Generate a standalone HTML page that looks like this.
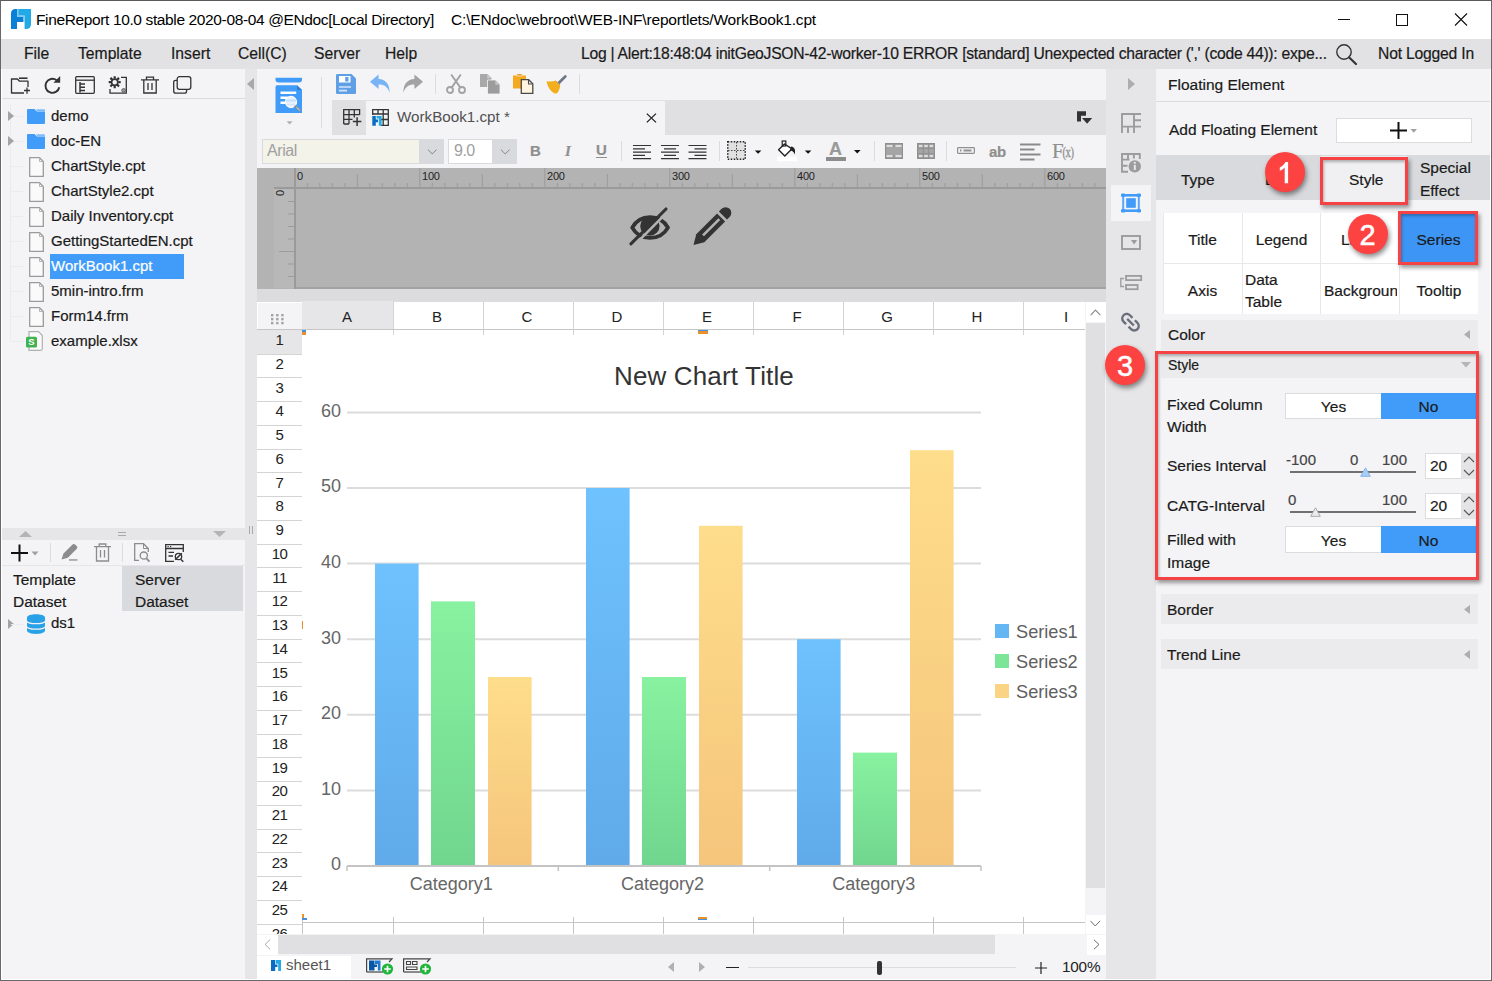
<!DOCTYPE html>
<html>
<head>
<meta charset="utf-8">
<title>FineReport</title>
<style>
*{box-sizing:border-box;margin:0;padding:0}
html,body{width:1492px;height:981px;overflow:hidden;background:#f4f4f6}
body{position:relative;font-family:"Liberation Sans",sans-serif;font-size:16px;color:#1a1a1a}
.a{position:absolute}
.t{position:absolute;white-space:nowrap;line-height:20px;height:20px;-webkit-text-stroke:0.2px}
svg{position:absolute;overflow:visible}
/* frame */
#titlebar{left:0;top:0;width:1492px;height:39px;background:#fff}
#menubar{left:0;top:39px;width:1492px;height:30px;background:#e2e2e4}
#frameL{left:0;top:0;width:1492px;height:981px;border:1px solid #686868;border-top-color:#5a5a5a;pointer-events:none}
#frameT{left:1px;top:69px;width:1490px;height:911px;border:1px solid #fff;border-top:none;pointer-events:none}
#frameB{display:none}
#frameR{display:none}
.menu{top:44px;font-size:15.7px;color:#1a1a1a}
/* left panel */
#leftdiv{left:245px;top:69px;width:12px;height:910px;background:#e6e6e8}
#ltbline{left:1px;top:98px;width:244px;height:1px;background:#dcdcde}
.tree{left:51px;font-size:15px}
.sel{left:50px;top:254px;width:134px;height:25px;background:#419bf9}
#split{left:1px;top:528px;width:244px;height:12px;background:#e6e6e8}
#dstab2{left:122px;top:566px;width:121px;height:45px;background:#d9dadd}
/* center */
#tabbar{left:332px;top:100px;width:774px;height:35px;background:#e0e0e2}
#tabbtn{left:332px;top:101px;width:35px;height:32px;background:#e0e0e2}
#tabact{left:366px;top:101px;width:299px;height:34px;background:#f4f4f6}
#grayarea{left:257px;top:168px;width:850px;height:121px;background:#b3b3b3}
#band{left:257px;top:289px;width:849px;height:14px;background:#dcdcde}
#sheet{left:257px;top:302px;width:829px;height:632px;background:#fff}
/* right */
#sidestrip{left:1106px;top:69px;width:50px;height:911px;background:#e6e6e8}
#rpanel{left:1156px;top:69px;width:335px;height:910px;background:#f4f4f6}
.red{border:3px solid #f54245;box-shadow:1.5px 3px 4px rgba(0,0,0,.38), inset 1px 2px 3px rgba(0,0,0,.28)}
.circ{width:40px;height:40px;border-radius:20px;background:#fd4242;color:#fff;font-size:29px;line-height:40px;text-align:center;box-shadow:1.5px 3px 5px rgba(0,0,0,.45);-webkit-text-stroke:0.5px #fff}
</style>
</head>
<body>
<!-- FRAME -->
<div class="a" id="titlebar"></div>
<div class="a" id="menubar"></div>


<!-- title bar content -->
<svg style="left:11px;top:9px" width="20" height="20" viewBox="0 0 20 20">
  <path d="M6 0 H20 V15 Q20 20 15 20 H13.6 V6.7 H6 Z" fill="#22aae6"/>
  <path d="M0 20 V4.5 Q0 0 4.5 0 H6 V8 H12.5 V13 H6 V20 Z" fill="#0a7fd6"/>
  <path d="M6 0 H7.6 V6.3 H13.6 V13 H12.5 V8 H6 Z" fill="#7fc9f1"/>
</svg>
<div class="t" id="ttl1" style="left:36px;top:9.6px;font-size:15.5px;letter-spacing:-0.37px;color:#000;-webkit-text-stroke:0">FineReport 10.0 stable 2020-08-04 @ENdoc[Local Directory]</div>
<div class="t" id="ttl2" style="left:451px;top:9.6px;font-size:15.5px;letter-spacing:-0.175px;color:#000;-webkit-text-stroke:0">C:\ENdoc\webroot\WEB-INF\reportlets/WorkBook1.cpt</div>
<svg style="left:1338px;top:12px" width="132" height="16" viewBox="0 0 132 16">
  <path d="M0 7.5 H12" stroke="#111" stroke-width="1" fill="none"/>
  <rect x="58.5" y="2.5" width="11" height="11" stroke="#111" stroke-width="1" fill="none"/>
  <path d="M117 1.5 L129 13.5 M129 1.5 L117 13.5" stroke="#111" stroke-width="1.1" fill="none"/>
</svg>
<!-- menu bar -->
<div class="t menu" id="m1" style="left:24px">File</div>
<div class="t menu" id="m2" style="left:78px">Template</div>
<div class="t menu" id="m3" style="left:171px">Insert</div>
<div class="t menu" id="m4" style="left:238px">Cell(C)</div>
<div class="t menu" id="m5" style="left:314px">Server</div>
<div class="t menu" id="m6" style="left:385px">Help</div>
<div class="t menu" id="mlog" style="left:581px;letter-spacing:-0.26px">Log | Alert:18:48:04 initGeoJSON-42-worker-10 ERROR [standard] Unexpected character (',' (code 44)): expe...</div>
<svg style="left:1335px;top:43px" width="24" height="24" viewBox="0 0 24 24">
  <circle cx="9" cy="9" r="7.2" stroke="#333" stroke-width="1.4" fill="none"/>
  <path d="M14.2 14.5 L21 21" stroke="#333" stroke-width="2.2" stroke-linecap="round"/>
</svg>
<div class="t menu" id="mlogin" style="left:1378px;letter-spacing:-0.2px">Not Logged In</div>

<!-- LEFT PANEL -->
<div class="a" id="leftdiv"></div>
<div class="a" id="ltbline"></div>
<div class="a" style="left:10px;top:104px;width:1px;height:238px;background:#ebebed"></div>
<div class="a" style="left:11px;top:116px;width:12px;height:1px;background:#ebebed"></div>
<svg style="left:8px;top:111px" width="6" height="10" viewBox="0 0 6 10"><path d="M0 0 L6 5 L0 10 Z" fill="#a3a3a3"/></svg>
<svg style="left:27px;top:109px" width="18" height="15" viewBox="0 0 18 15"><path d="M1 0 H7.5 L10 2.6 H18 V14 Q18 15 17 15 H1 Q0 15 0 14 V1 Q0 0 1 0 Z" fill="#419bf9"/><path d="M9 0.3 H17 Q18 0.3 18 1.3 V2.6 H10.6 Z" fill="#7dbcfb"/></svg>
<div class="t tree" id="tr0" style="top:106px;color:#1a1a1a">demo</div>
<div class="a" style="left:11px;top:141px;width:12px;height:1px;background:#ebebed"></div>
<svg style="left:8px;top:136px" width="6" height="10" viewBox="0 0 6 10"><path d="M0 0 L6 5 L0 10 Z" fill="#a3a3a3"/></svg>
<svg style="left:27px;top:134px" width="18" height="15" viewBox="0 0 18 15"><path d="M1 0 H7.5 L10 2.6 H18 V14 Q18 15 17 15 H1 Q0 15 0 14 V1 Q0 0 1 0 Z" fill="#419bf9"/><path d="M9 0.3 H17 Q18 0.3 18 1.3 V2.6 H10.6 Z" fill="#7dbcfb"/></svg>
<div class="t tree" id="tr1" style="top:131px;color:#1a1a1a">doc-EN</div>
<div class="a" style="left:11px;top:166px;width:12px;height:1px;background:#ebebed"></div>
<svg style="left:28.7px;top:156.5px" width="15" height="20" viewBox="0 0 15 20"><path d="M0.7 0.7 H10.5 L14.3 4.5 V19.3 H0.7 Z" fill="#fafafa" stroke="#9a9a9a" stroke-width="1.3"/><path d="M10.5 0.7 V4.5 H14.3" fill="none" stroke="#b5b5b5" stroke-width="1"/></svg>
<div class="t tree" id="tr2" style="top:156px;color:#1a1a1a">ChartStyle.cpt</div>
<div class="a" style="left:11px;top:191px;width:12px;height:1px;background:#ebebed"></div>
<svg style="left:28.7px;top:181.5px" width="15" height="20" viewBox="0 0 15 20"><path d="M0.7 0.7 H10.5 L14.3 4.5 V19.3 H0.7 Z" fill="#fafafa" stroke="#9a9a9a" stroke-width="1.3"/><path d="M10.5 0.7 V4.5 H14.3" fill="none" stroke="#b5b5b5" stroke-width="1"/></svg>
<div class="t tree" id="tr3" style="top:181px;color:#1a1a1a">ChartStyle2.cpt</div>
<div class="a" style="left:11px;top:216px;width:12px;height:1px;background:#ebebed"></div>
<svg style="left:28.7px;top:206.5px" width="15" height="20" viewBox="0 0 15 20"><path d="M0.7 0.7 H10.5 L14.3 4.5 V19.3 H0.7 Z" fill="#fafafa" stroke="#9a9a9a" stroke-width="1.3"/><path d="M10.5 0.7 V4.5 H14.3" fill="none" stroke="#b5b5b5" stroke-width="1"/></svg>
<div class="t tree" id="tr4" style="top:206px;color:#1a1a1a">Daily Inventory.cpt</div>
<div class="a" style="left:11px;top:241px;width:12px;height:1px;background:#ebebed"></div>
<svg style="left:28.7px;top:231.5px" width="15" height="20" viewBox="0 0 15 20"><path d="M0.7 0.7 H10.5 L14.3 4.5 V19.3 H0.7 Z" fill="#fafafa" stroke="#9a9a9a" stroke-width="1.3"/><path d="M10.5 0.7 V4.5 H14.3" fill="none" stroke="#b5b5b5" stroke-width="1"/></svg>
<div class="t tree" id="tr5" style="top:231px;color:#1a1a1a">GettingStartedEN.cpt</div>
<div class="a sel"></div>
<div class="a" style="left:11px;top:266px;width:12px;height:1px;background:#ebebed"></div>
<svg style="left:28.7px;top:256.5px" width="15" height="20" viewBox="0 0 15 20"><path d="M0.7 0.7 H10.5 L14.3 4.5 V19.3 H0.7 Z" fill="#fafafa" stroke="#9a9a9a" stroke-width="1.3"/><path d="M10.5 0.7 V4.5 H14.3" fill="none" stroke="#b5b5b5" stroke-width="1"/></svg>
<div class="t tree" id="tr6" style="top:256px;color:#fff">WorkBook1.cpt</div>
<div class="a" style="left:11px;top:291px;width:12px;height:1px;background:#ebebed"></div>
<svg style="left:28.7px;top:281.5px" width="15" height="20" viewBox="0 0 15 20"><path d="M0.7 0.7 H10.5 L14.3 4.5 V19.3 H0.7 Z" fill="#fafafa" stroke="#9a9a9a" stroke-width="1.3"/><path d="M10.5 0.7 V4.5 H14.3" fill="none" stroke="#b5b5b5" stroke-width="1"/></svg>
<div class="t tree" id="tr7" style="top:281px;color:#1a1a1a">5min-intro.frm</div>
<div class="a" style="left:11px;top:316px;width:12px;height:1px;background:#ebebed"></div>
<svg style="left:28.7px;top:306.5px" width="15" height="20" viewBox="0 0 15 20"><path d="M0.7 0.7 H10.5 L14.3 4.5 V19.3 H0.7 Z" fill="#fafafa" stroke="#9a9a9a" stroke-width="1.3"/><path d="M10.5 0.7 V4.5 H14.3" fill="none" stroke="#b5b5b5" stroke-width="1"/></svg>
<div class="t tree" id="tr8" style="top:306px;color:#1a1a1a">Form14.frm</div>
<div class="a" style="left:11px;top:341px;width:12px;height:1px;background:#ebebed"></div>
<svg style="left:26px;top:331px" width="17" height="20" viewBox="0 0 17 20"><path d="M3 0.7 H12.5 L16.3 4.5 V17.5 Q16.3 19.3 14.5 19.3 H3 Z" fill="#fafafa" stroke="#b0b0b0" stroke-width="1.2"/><rect x="0" y="5.8" width="11" height="10.6" rx="1.5" fill="#3fb34f"/><text x="5.5" y="14.4" font-size="9.5" font-weight="bold" fill="#fff" text-anchor="middle" font-family="Liberation Sans">S</text></svg>
<div class="t tree" id="tr9" style="top:331px;color:#1a1a1a">example.xlsx</div>
<div class="a" id="split"></div>
<div class="a" id="dstab2"></div>


<!-- left toolbar icons -->
<svg style="left:10px;top:76px" width="22" height="19" viewBox="0 0 22 19" fill="none" stroke="#333" stroke-width="1.3" stroke-linejoin="round">
  <path d="M14 17 H1.5 V3 H7.5 L9.5 5.2 H18 V11"/><path d="M9 2.2 H17.5" stroke-width="1.6"/><path d="M14 14.5 H20 M17 11.5 V17.8"/>
</svg>
<svg style="left:44px;top:76px" width="18" height="18" viewBox="0 0 18 18" fill="none" stroke="#333" stroke-width="1.9">
  <path d="M15.3 11.2 A7 7 0 1 1 12.6 4.2"/><path d="M16.2 0 V6.8 H9.4 Z" fill="#333" stroke="none"/>
</svg>
<svg style="left:75px;top:76px" width="20" height="18" viewBox="0 0 20 18" fill="none" stroke="#333" stroke-width="1.3">
  <rect x="0.7" y="0.7" width="18.6" height="16.6" rx="1"/><path d="M0.7 4.2 H19.3"/><path d="M5 6 V16.5 M5 8 H10 M5 11.3 H10 M5 14.6 H10" stroke-width="1.5"/>
</svg>
<svg style="left:108px;top:76px" width="20" height="18" viewBox="0 0 20 18" fill="none" stroke="#333" stroke-width="1.3">
  <path d="M13 1.4 H18.3 V17.2 H2 V13"/>
  <circle cx="6.7" cy="6.2" r="3.1" stroke-width="1.6"/><path d="M6.7 0.2 V2.6 M6.7 9.8 V12.2 M0.7 6.2 H3.1 M10.3 6.2 H12.7 M2.4 1.9 L4.1 3.6 M9.3 8.8 L11 10.5 M2.4 10.5 L4.1 8.8 M9.3 3.6 L11 1.9" stroke-width="2.2"/>
  <circle cx="15.6" cy="14.4" r="1.9" fill="#999" stroke="#555" stroke-width="0.8"/>
</svg>
<svg style="left:141px;top:75px" width="18" height="19" viewBox="0 0 18 19" fill="none" stroke="#333" stroke-width="1.3">
  <path d="M0 4.8 H18 M5.5 4.6 V2.2 H12.5 V4.6 M2.8 4.9 V18 H15.2 V4.9 M7 8 V15 M11 8 V15"/>
</svg>
<svg style="left:173px;top:76px" width="19" height="18" viewBox="0 0 19 18" fill="none" stroke="#333" stroke-width="1.3">
  <rect x="4.2" y="0.7" width="13.6" height="12.6" rx="2.2"/><path d="M4 4.3 H2.8 Q0.7 4.3 0.7 6.4 V15 Q0.7 17.2 2.8 17.2 H11.5 Q13.6 17.2 13.6 15 V13.5"/>
</svg>
<svg style="left:247px;top:78px" width="8" height="12" viewBox="0 0 8 12"><path d="M7 0 L0 6 L7 12 Z" fill="#a8a8a8"/></svg>
<!-- splitter arrows -->
<svg style="left:19px;top:531px" width="13" height="6" viewBox="0 0 13 6"><path d="M0 6 L6.5 0 L13 6 Z" fill="#b4b4b4"/></svg>
<svg style="left:213px;top:531px" width="13" height="6" viewBox="0 0 13 6"><path d="M0 0 L13 0 L6.5 6 Z" fill="#b4b4b4"/></svg>
<div class="a" style="left:118px;top:532px;width:8px;height:1px;background:#aaa"></div>
<div class="a" style="left:118px;top:535px;width:8px;height:1px;background:#aaa"></div>
<div class="a" style="left:249px;top:526px;width:1px;height:8px;background:#aaa"></div>
<div class="a" style="left:252px;top:526px;width:1px;height:8px;background:#aaa"></div>
<!-- dataset toolbar -->
<svg style="left:11px;top:544px" width="30" height="18" viewBox="0 0 30 18" fill="none" stroke="#111" stroke-width="2">
  <path d="M0 9 H17 M8.5 0.5 V17.5"/><path d="M20.5 7.5 H27.5 L24 11.5 Z" fill="#a0a0a0" stroke="none"/>
</svg>
<div class="a" style="left:50px;top:543px;width:1px;height:19px;background:#dcdcde"></div>
<svg style="left:61px;top:543px" width="19" height="19" viewBox="0 0 19 19" fill="#8c8c8c" stroke="none">
  <path d="M0.5 16.5 L2.5 10.5 L11.5 1.5 Q12.8 0.3 14.2 1.5 L15.8 3.2 Q17 4.5 15.8 5.8 L6.8 14.8 Z"/><rect x="8" y="16.3" width="8.5" height="1.3"/>
</svg>
<svg style="left:94px;top:543px" width="17" height="19" viewBox="0 0 17 19" fill="none" stroke="#8c8c8c" stroke-width="1.3">
  <path d="M0 3.7 H17 M5.2 3.5 V1 H11.8 V3.5 M2.5 3.8 V18 H14.5 V3.8 M6.5 7 V14.5 M10.5 7 V14.5"/>
</svg>
<div class="a" style="left:122px;top:543px;width:1px;height:19px;background:#dcdcde"></div>
<svg style="left:134px;top:543px" width="17" height="20" viewBox="0 0 17 20" fill="none" stroke="#8c8c8c" stroke-width="1.3">
  <path d="M5 17.3 H0.7 V0.7 H9.5 L14.3 5.5 V9"/><path d="M9.5 0.7 V5.5 H14.3" stroke-width="1"/><circle cx="9.8" cy="12.6" r="3.6"/><path d="M12.4 15.4 L15.5 18.6" stroke-width="1.8"/>
</svg>
<svg style="left:165px;top:544px" width="19" height="18" viewBox="0 0 19 18" fill="none" stroke="#333" stroke-width="1.3">
  <path d="M18.3 8 V0.7 H0.7 V17.3 H9"/><path d="M0.7 4.5 H18.3 M3.5 8.3 H9 M3.5 12 H8"/><path d="M2.5 2.6 H3.7 M5 2.6 H6.2" stroke-width="1.1"/>
  <circle cx="13.5" cy="12.5" r="3.2"/><path d="M10.2 15.8 L16.8 9.2 M16 15.5 L18.3 17.8" stroke-width="1.5"/>
</svg>
<div class="a" style="left:1px;top:565px;width:244px;height:1px;background:#e6e6e8"></div>
<div class="t" id="ds1a" style="left:13px;top:570px;font-size:15.5px">Template</div>
<div class="t" id="ds1b" style="left:13px;top:592px;font-size:15.5px">Dataset</div>
<div class="t" id="ds2a" style="left:135px;top:570px;font-size:15.5px">Server</div>
<div class="t" id="ds2b" style="left:135px;top:592px;font-size:15.5px">Dataset</div>
<svg style="left:8px;top:619px" width="6" height="10" viewBox="0 0 6 10"><path d="M0 0 L6 5 L0 10 Z" fill="#a3a3a3"/></svg>
<div class="a" style="left:11px;top:624px;width:12px;height:1px;background:#ebebed"></div>
<svg style="left:27px;top:614px" width="18" height="20" viewBox="0 0 18 20">
  <path d="M0 3.5 C0 -1 18 -1 18 3.5 V16.5 C18 21 0 21 0 16.5 Z" fill="#29a1e6"/>
  <path d="M0 7.3 C2 10.5 16 10.5 18 7.3 M0 12.8 C2 16 16 16 18 12.8" stroke="#f4f4f6" stroke-width="1.3" fill="none"/>
</svg>
<div class="t" id="ds1" style="left:51px;top:613px;font-size:15px">ds1</div>

<!-- CENTER -->
<div class="a" id="tabbar"></div>
<div class="a" id="tabact"></div>

<!-- ruler -->
<div class="a" style="left:257px;top:168px;width:849px;height:121px;background:#b3b3b3"></div>
<div class="a" style="left:274px;top:189px;width:20px;height:99px;background:#b8b8b8"></div><div class="a" style="left:274px;top:187px;width:832px;height:2px;background:#9a9a9a"></div>
<div class="a" style="left:294px;top:168px;width:2px;height:121px;background:#9a9a9a"></div>

<div class="a" style="left:296px;top:287px;width:810px;height:1.5px;background:#a2a2a2"></div>
<svg style="left:0;top:0" width="1492" height="300" viewBox="0 0 1492 300"><path d="M294.8 168 V188 M307.3 183 V188 M319.8 183 V188 M332.3 183 V188 M344.8 183 V188 M357.3 174 V188 M369.8 183 V188 M382.3 183 V188 M394.8 183 V188 M407.3 183 V188 M419.8 168 V188 M432.3 183 V188 M444.8 183 V188 M457.3 183 V188 M469.8 183 V188 M482.3 174 V188 M494.8 183 V188 M507.3 183 V188 M519.8 183 V188 M532.3 183 V188 M544.8 168 V188 M557.3 183 V188 M569.8 183 V188 M582.3 183 V188 M594.8 183 V188 M607.3 174 V188 M619.8 183 V188 M632.3 183 V188 M644.8 183 V188 M657.3 183 V188 M669.8 168 V188 M682.3 183 V188 M694.8 183 V188 M707.3 183 V188 M719.8 183 V188 M732.3 174 V188 M744.8 183 V188 M757.3 183 V188 M769.8 183 V188 M782.3 183 V188 M794.8 168 V188 M807.3 183 V188 M819.8 183 V188 M832.3 183 V188 M844.8 183 V188 M857.3 174 V188 M869.8 183 V188 M882.3 183 V188 M894.8 183 V188 M907.3 183 V188 M919.8 168 V188 M932.3 183 V188 M944.8 183 V188 M957.3 183 V188 M969.8 183 V188 M982.3 174 V188 M994.8 183 V188 M1007.3 183 V188 M1019.8 183 V188 M1032.3 183 V188 M1044.8 168 V188 M1057.3 183 V188 M1069.8 183 V188 M1082.3 183 V188 M1094.8 183 V188 " stroke="#9c9c9c" stroke-width="1" fill="none"/><path d="M288 201.5 H294 M288 214.0 H294 M288 226.5 H294 M288 239.0 H294 M279 251.5 H294 M288 264.0 H294 M288 276.5 H294 " stroke="#9c9c9c" stroke-width="1" fill="none"/></svg>
<div class="t" style="left:297.0px;top:169px;font-size:11px;line-height:14px;height:14px;color:#222;letter-spacing:-0.2px;-webkit-text-stroke:0">0</div>
<div class="t" style="left:422.0px;top:169px;font-size:11px;line-height:14px;height:14px;color:#222;letter-spacing:-0.2px;-webkit-text-stroke:0">100</div>
<div class="t" style="left:547.0px;top:169px;font-size:11px;line-height:14px;height:14px;color:#222;letter-spacing:-0.2px;-webkit-text-stroke:0">200</div>
<div class="t" style="left:672.0px;top:169px;font-size:11px;line-height:14px;height:14px;color:#222;letter-spacing:-0.2px;-webkit-text-stroke:0">300</div>
<div class="t" style="left:797.0px;top:169px;font-size:11px;line-height:14px;height:14px;color:#222;letter-spacing:-0.2px;-webkit-text-stroke:0">400</div>
<div class="t" style="left:922.0px;top:169px;font-size:11px;line-height:14px;height:14px;color:#222;letter-spacing:-0.2px;-webkit-text-stroke:0">500</div>
<div class="t" style="left:1047.0px;top:169px;font-size:11px;line-height:14px;height:14px;color:#222;letter-spacing:-0.2px;-webkit-text-stroke:0">600</div>
<div class="t" style="left:276.5px;top:185.5px;font-size:11px;line-height:14px;height:14px;color:#222;transform:rotate(-90deg);transform-origin:center;-webkit-text-stroke:0">0</div>
<svg style="left:625px;top:203px" width="50" height="46" viewBox="625 203 50 46">
  <path d="M632.2 227.6 C640 213.6 660 213.6 668 227.6 C660 241.4 640 241.4 632.2 227.6 Z" fill="none" stroke="#333" stroke-width="3.8" stroke-linejoin="round"/>
  <circle cx="649.9" cy="226" r="9.7" fill="#333"/>
  <path d="M634.2 245.3 L668.8 210.7" stroke="#b3b3b3" stroke-width="2.6"/>
  <path d="M630.9 243.9 L666 209" stroke="#333" stroke-width="3.1" stroke-linecap="round"/>
</svg>
<svg style="left:690px;top:203px" width="46" height="46" viewBox="690 203 46 46">
  <g transform="translate(693.5 245) rotate(-45)">
    <path d="M0 0 L9.6 -5.7 H39 V5.7 H9.6 Z" fill="#333"/>
    <path d="M41.6 -5.7 H45.4 A5.7 5.7 0 0 1 45.4 5.7 H41.6 Z" fill="#333"/>
    <rect x="13.5" y="-1.3" width="23" height="2.6" fill="#b3b3b3"/>
  </g>
</svg>

<div class="a" id="band"></div>

<!-- sheet -->
<div class="a" style="left:257px;top:302px;width:828px;height:632px;background:#fff"></div>
<div class="a" style="left:258px;top:303px;width:44px;height:26px;background:#f4f4f6"></div>
<div class="a" style="left:302px;top:301px;width:91px;height:28px;background:#e6e6e8"></div>
<svg style="left:270.9px;top:313.9px" width="13" height="11" viewBox="0 0 13 11"><rect x="0.0" y="0.00" width="2.4" height="2.4" fill="#a3a3a3"/><rect x="5.1" y="0.00" width="2.4" height="2.4" fill="#a3a3a3"/><rect x="10.2" y="0.00" width="2.4" height="2.4" fill="#a3a3a3"/><rect x="0.0" y="3.95" width="2.4" height="2.4" fill="#a3a3a3"/><rect x="5.1" y="3.95" width="2.4" height="2.4" fill="#a3a3a3"/><rect x="10.2" y="3.95" width="2.4" height="2.4" fill="#a3a3a3"/><rect x="0.0" y="7.90" width="2.4" height="2.4" fill="#a3a3a3"/><rect x="5.1" y="7.90" width="2.4" height="2.4" fill="#a3a3a3"/><rect x="10.2" y="7.90" width="2.4" height="2.4" fill="#a3a3a3"/></svg>
<div class="t" style="left:327px;top:307px;width:40px;text-align:center;font-size:15px;color:#222;-webkit-text-stroke:0">A</div>
<div class="t" style="left:417px;top:307px;width:40px;text-align:center;font-size:15px;color:#222;-webkit-text-stroke:0">B</div>
<div class="a" style="left:393px;top:302px;width:1px;height:33px;background:#d4d4d4"></div>
<div class="t" style="left:507px;top:307px;width:40px;text-align:center;font-size:15px;color:#222;-webkit-text-stroke:0">C</div>
<div class="a" style="left:483px;top:302px;width:1px;height:33px;background:#d4d4d4"></div>
<div class="t" style="left:597px;top:307px;width:40px;text-align:center;font-size:15px;color:#222;-webkit-text-stroke:0">D</div>
<div class="a" style="left:573px;top:302px;width:1px;height:33px;background:#d4d4d4"></div>
<div class="t" style="left:687px;top:307px;width:40px;text-align:center;font-size:15px;color:#222;-webkit-text-stroke:0">E</div>
<div class="a" style="left:663px;top:302px;width:1px;height:33px;background:#d4d4d4"></div>
<div class="t" style="left:777px;top:307px;width:40px;text-align:center;font-size:15px;color:#222;-webkit-text-stroke:0">F</div>
<div class="a" style="left:753px;top:302px;width:1px;height:33px;background:#d4d4d4"></div>
<div class="t" style="left:867px;top:307px;width:40px;text-align:center;font-size:15px;color:#222;-webkit-text-stroke:0">G</div>
<div class="a" style="left:843px;top:302px;width:1px;height:33px;background:#d4d4d4"></div>
<div class="t" style="left:957px;top:307px;width:40px;text-align:center;font-size:15px;color:#222;-webkit-text-stroke:0">H</div>
<div class="a" style="left:933px;top:302px;width:1px;height:33px;background:#d4d4d4"></div>
<div class="t" style="left:1046px;top:307px;width:40px;text-align:center;font-size:15px;color:#222;-webkit-text-stroke:0">I</div>
<div class="a" style="left:1023px;top:302px;width:1px;height:33px;background:#d4d4d4"></div>
<div class="a" style="left:257px;top:329px;width:828px;height:1px;background:#c6c6c6"></div>
<div class="a" style="left:257px;top:330px;width:45px;height:23.5px;background:#e6e6e8"></div>
<div class="t" style="left:257px;top:330.00px;width:45px;text-align:center;font-size:15px;letter-spacing:-0.5px;color:#222;-webkit-text-stroke:0">1</div>
<div class="a" style="left:257px;top:353.50px;width:45px;height:1px;background:#d4d4d4"></div>
<div class="t" style="left:257px;top:353.75px;width:45px;text-align:center;font-size:15px;letter-spacing:-0.5px;color:#222;-webkit-text-stroke:0">2</div>
<div class="a" style="left:257px;top:377.25px;width:45px;height:1px;background:#d4d4d4"></div>
<div class="t" style="left:257px;top:377.50px;width:45px;text-align:center;font-size:15px;letter-spacing:-0.5px;color:#222;-webkit-text-stroke:0">3</div>
<div class="a" style="left:257px;top:401.00px;width:45px;height:1px;background:#d4d4d4"></div>
<div class="t" style="left:257px;top:401.25px;width:45px;text-align:center;font-size:15px;letter-spacing:-0.5px;color:#222;-webkit-text-stroke:0">4</div>
<div class="a" style="left:257px;top:424.75px;width:45px;height:1px;background:#d4d4d4"></div>
<div class="t" style="left:257px;top:425.00px;width:45px;text-align:center;font-size:15px;letter-spacing:-0.5px;color:#222;-webkit-text-stroke:0">5</div>
<div class="a" style="left:257px;top:448.50px;width:45px;height:1px;background:#d4d4d4"></div>
<div class="t" style="left:257px;top:448.75px;width:45px;text-align:center;font-size:15px;letter-spacing:-0.5px;color:#222;-webkit-text-stroke:0">6</div>
<div class="a" style="left:257px;top:472.25px;width:45px;height:1px;background:#d4d4d4"></div>
<div class="t" style="left:257px;top:472.50px;width:45px;text-align:center;font-size:15px;letter-spacing:-0.5px;color:#222;-webkit-text-stroke:0">7</div>
<div class="a" style="left:257px;top:496.00px;width:45px;height:1px;background:#d4d4d4"></div>
<div class="t" style="left:257px;top:496.25px;width:45px;text-align:center;font-size:15px;letter-spacing:-0.5px;color:#222;-webkit-text-stroke:0">8</div>
<div class="a" style="left:257px;top:519.75px;width:45px;height:1px;background:#d4d4d4"></div>
<div class="t" style="left:257px;top:520.00px;width:45px;text-align:center;font-size:15px;letter-spacing:-0.5px;color:#222;-webkit-text-stroke:0">9</div>
<div class="a" style="left:257px;top:543.50px;width:45px;height:1px;background:#d4d4d4"></div>
<div class="t" style="left:257px;top:543.75px;width:45px;text-align:center;font-size:15px;letter-spacing:-0.5px;color:#222;-webkit-text-stroke:0">10</div>
<div class="a" style="left:257px;top:567.25px;width:45px;height:1px;background:#d4d4d4"></div>
<div class="t" style="left:257px;top:567.50px;width:45px;text-align:center;font-size:15px;letter-spacing:-0.5px;color:#222;-webkit-text-stroke:0">11</div>
<div class="a" style="left:257px;top:591.00px;width:45px;height:1px;background:#d4d4d4"></div>
<div class="t" style="left:257px;top:591.25px;width:45px;text-align:center;font-size:15px;letter-spacing:-0.5px;color:#222;-webkit-text-stroke:0">12</div>
<div class="a" style="left:257px;top:614.75px;width:45px;height:1px;background:#d4d4d4"></div>
<div class="t" style="left:257px;top:615.00px;width:45px;text-align:center;font-size:15px;letter-spacing:-0.5px;color:#222;-webkit-text-stroke:0">13</div>
<div class="a" style="left:257px;top:638.50px;width:45px;height:1px;background:#d4d4d4"></div>
<div class="t" style="left:257px;top:638.75px;width:45px;text-align:center;font-size:15px;letter-spacing:-0.5px;color:#222;-webkit-text-stroke:0">14</div>
<div class="a" style="left:257px;top:662.25px;width:45px;height:1px;background:#d4d4d4"></div>
<div class="t" style="left:257px;top:662.50px;width:45px;text-align:center;font-size:15px;letter-spacing:-0.5px;color:#222;-webkit-text-stroke:0">15</div>
<div class="a" style="left:257px;top:686.00px;width:45px;height:1px;background:#d4d4d4"></div>
<div class="t" style="left:257px;top:686.25px;width:45px;text-align:center;font-size:15px;letter-spacing:-0.5px;color:#222;-webkit-text-stroke:0">16</div>
<div class="a" style="left:257px;top:709.75px;width:45px;height:1px;background:#d4d4d4"></div>
<div class="t" style="left:257px;top:710.00px;width:45px;text-align:center;font-size:15px;letter-spacing:-0.5px;color:#222;-webkit-text-stroke:0">17</div>
<div class="a" style="left:257px;top:733.50px;width:45px;height:1px;background:#d4d4d4"></div>
<div class="t" style="left:257px;top:733.75px;width:45px;text-align:center;font-size:15px;letter-spacing:-0.5px;color:#222;-webkit-text-stroke:0">18</div>
<div class="a" style="left:257px;top:757.25px;width:45px;height:1px;background:#d4d4d4"></div>
<div class="t" style="left:257px;top:757.50px;width:45px;text-align:center;font-size:15px;letter-spacing:-0.5px;color:#222;-webkit-text-stroke:0">19</div>
<div class="a" style="left:257px;top:781.00px;width:45px;height:1px;background:#d4d4d4"></div>
<div class="t" style="left:257px;top:781.25px;width:45px;text-align:center;font-size:15px;letter-spacing:-0.5px;color:#222;-webkit-text-stroke:0">20</div>
<div class="a" style="left:257px;top:804.75px;width:45px;height:1px;background:#d4d4d4"></div>
<div class="t" style="left:257px;top:805.00px;width:45px;text-align:center;font-size:15px;letter-spacing:-0.5px;color:#222;-webkit-text-stroke:0">21</div>
<div class="a" style="left:257px;top:828.50px;width:45px;height:1px;background:#d4d4d4"></div>
<div class="t" style="left:257px;top:828.75px;width:45px;text-align:center;font-size:15px;letter-spacing:-0.5px;color:#222;-webkit-text-stroke:0">22</div>
<div class="a" style="left:257px;top:852.25px;width:45px;height:1px;background:#d4d4d4"></div>
<div class="t" style="left:257px;top:852.50px;width:45px;text-align:center;font-size:15px;letter-spacing:-0.5px;color:#222;-webkit-text-stroke:0">23</div>
<div class="a" style="left:257px;top:876.00px;width:45px;height:1px;background:#d4d4d4"></div>
<div class="t" style="left:257px;top:876.25px;width:45px;text-align:center;font-size:15px;letter-spacing:-0.5px;color:#222;-webkit-text-stroke:0">24</div>
<div class="a" style="left:257px;top:899.75px;width:45px;height:1px;background:#d4d4d4"></div>
<div class="t" style="left:257px;top:900.00px;width:45px;text-align:center;font-size:15px;letter-spacing:-0.5px;color:#222;-webkit-text-stroke:0">25</div>
<div class="a" style="left:257px;top:923.50px;width:45px;height:1px;background:#d4d4d4"></div>
<div class="t" style="left:257px;top:923.75px;width:45px;text-align:center;font-size:15px;letter-spacing:-0.5px;color:#222;-webkit-text-stroke:0">26</div>
<div class="a" style="left:302px;top:922px;width:784px;height:1px;background:#c6c6c6"></div>
<div class="a" style="left:302px;top:917px;width:1px;height:17px;background:#c6c6c6"></div>
<div class="a" style="left:393px;top:917px;width:1px;height:17px;background:#c6c6c6"></div>
<div class="a" style="left:483px;top:917px;width:1px;height:17px;background:#c6c6c6"></div>
<div class="a" style="left:573px;top:917px;width:1px;height:17px;background:#c6c6c6"></div>
<div class="a" style="left:663px;top:917px;width:1px;height:17px;background:#c6c6c6"></div>
<div class="a" style="left:753px;top:917px;width:1px;height:17px;background:#c6c6c6"></div>
<div class="a" style="left:843px;top:917px;width:1px;height:17px;background:#c6c6c6"></div>
<div class="a" style="left:933px;top:917px;width:1px;height:17px;background:#c6c6c6"></div>
<div class="a" style="left:1023px;top:917px;width:1px;height:17px;background:#c6c6c6"></div>
<div class="a" style="left:302px;top:330px;width:4px;height:5px;background:#e8912a"></div><div class="a" style="left:302px;top:330px;width:4px;height:2px;background:#4a90e2"></div>
<div class="a" style="left:698px;top:330px;width:10px;height:4px;background:#e8912a"></div><div class="a" style="left:698px;top:330px;width:10px;height:1px;background:#4a90e2"></div>
<div class="a" style="left:302px;top:914px;width:2px;height:6px;background:#e8912a"></div><div class="a" style="left:302px;top:918px;width:5px;height:2px;background:#4a90e2"></div>
<div class="a" style="left:698px;top:917px;width:9px;height:3px;background:#e8912a"></div><div class="a" style="left:698px;top:919px;width:9px;height:1px;background:#4a90e2"></div>
<div class="a" style="left:302px;top:621px;width:1px;height:8px;background:#e8912a"></div>
<div class="a" style="left:1085px;top:302px;width:21px;height:632px;background:#f4f4f6"></div>
<div class="a" style="left:1086px;top:302px;width:20px;height:20px;background:#fff"></div><div class="a" style="left:1086px;top:915px;width:20px;height:19px;background:#fff"></div><div class="a" style="left:1086px;top:323px;width:19px;height:565px;background:#e0e0e2"></div>
<svg style="left:1090px;top:309px" width="11" height="7" viewBox="0 0 12 8"><path d="M0.5 7 L6 1.2 L11.5 7" stroke="#8a8a8a" stroke-width="1.3" fill="none"/></svg>
<svg style="left:1090px;top:920px" width="10.5" height="7" viewBox="0 0 12 8"><path d="M0.5 1 L6 6.8 L11.5 1" stroke="#666" stroke-width="1.1" fill="none"/></svg>
<div class="a" style="left:257px;top:934px;width:849px;height:22px;background:#f4f4f6"></div>
<div class="a" style="left:257px;top:935px;width:21px;height:20px;background:#fff"></div><div class="a" style="left:1087px;top:935px;width:19px;height:20px;background:#fff"></div><div class="a" style="left:278px;top:935px;width:717px;height:19px;background:#e0e0e2"></div>
<svg style="left:264px;top:938.5px" width="7" height="11" viewBox="0 0 8 12"><path d="M7 0.5 L1.2 6 L7 11.5" stroke="#a5a5a5" stroke-width="1.1" fill="none"/></svg>
<svg style="left:1092.5px;top:938.5px" width="7" height="11" viewBox="0 0 8 12"><path d="M1 0.5 L6.8 6 L1 11.5" stroke="#666" stroke-width="1.1" fill="none"/></svg>
<div class="a" style="left:257px;top:956px;width:94px;height:23px;background:#fff"></div>
<svg style="left:271px;top:960px" width="10" height="11" viewBox="0 0 10 11"><path d="M0 0 H4.2 V4.5 H6.5 V7 H4.2 V11 H0 Z" fill="#0a6cc2"/><path d="M4.8 0 H10 V11 H7.2 V3.8 H4.8 Z" fill="#22aae6"/></svg>
<div class="t" id="sheet1" style="left:286px;top:955px;font-size:15px;color:#555;-webkit-text-stroke:0">sheet1</div>
<svg style="left:366px;top:958px" width="28" height="17" viewBox="0 0 28 17">
  <path d="M0.6 14 V0.8 H26 L23 4" fill="none" stroke="#444" stroke-width="1.2"/><path d="M0.6 14 H17" stroke="#444" stroke-width="1.2"/>
  <path d="M3 2.5 H8.5 V6.5 H11 V9 H8.5 V12.5 H3 Z" fill="#0a56a6"/><path d="M9 2.5 H14.5 V12.5 H11.8 V6 H9 Z" fill="#1e7bd0"/>
  <circle cx="21.5" cy="11" r="5.6" fill="#1eb53a"/><path d="M18.2 11 H24.8 M21.5 7.7 V14.3" stroke="#fff" stroke-width="1.7"/>
</svg>
<svg style="left:403px;top:958px" width="29" height="17" viewBox="0 0 29 17">
  <path d="M0.6 14 V0.8 H27 L24 4" fill="none" stroke="#444" stroke-width="1.2"/><path d="M0.6 14 H18" stroke="#444" stroke-width="1.2"/>
  <path d="M3.5 3.5 H7.5 V6.5 H3.5 Z M9.5 3.5 H14 V6.5 H9.5 Z M3.5 9 H14 V11.5 H3.5 Z" fill="none" stroke="#444" stroke-width="1.1"/>
  <circle cx="22.5" cy="11" r="5.6" fill="#1eb53a"/><path d="M19.2 11 H25.8 M22.5 7.7 V14.3" stroke="#fff" stroke-width="1.7"/>
</svg>
<svg style="left:668px;top:962px" width="6" height="10" viewBox="0 0 6 10"><path d="M6 0 L0 5 L6 10 Z" fill="#b0b0b0"/></svg>
<svg style="left:699px;top:962px" width="6" height="10" viewBox="0 0 6 10"><path d="M0 0 L6 5 L0 10 Z" fill="#b0b0b0"/></svg>
<div class="a" style="left:726px;top:967px;width:13px;height:1px;background:#222"></div>
<div class="a" style="left:748px;top:967px;width:268px;height:1px;background:#dcdcde"></div>
<div class="a" style="left:877px;top:961px;width:5px;height:14px;background:#333;border-radius:2px"></div>
<svg style="left:1034.5px;top:962px" width="12" height="12" viewBox="0 0 12 12"><path d="M0 6 H12 M6 0 V12" stroke="#222" stroke-width="1.2"/></svg>
<div class="t" id="pct" style="left:1062px;top:957px;font-size:15.3px;letter-spacing:-0.2px;color:#222;-webkit-text-stroke:0">100%</div>
<svg style="left:0;top:0" width="1492" height="981" viewBox="0 0 1492 981" font-family="Liberation Sans, sans-serif">
<defs>
<linearGradient id="gb" x1="0" y1="0" x2="0" y2="1"><stop offset="0" stop-color="#6ec2fe"/><stop offset="1" stop-color="#60aae9"/></linearGradient>
<linearGradient id="gg" x1="0" y1="0" x2="0" y2="1"><stop offset="0" stop-color="#88f2a0"/><stop offset="1" stop-color="#70d68e"/></linearGradient>
<linearGradient id="gy" x1="0" y1="0" x2="0" y2="1"><stop offset="0" stop-color="#fedd8b"/><stop offset="1" stop-color="#f5c57c"/></linearGradient>
</defs>
<text x="704" y="385" font-size="26" letter-spacing="0.15" fill="#333" text-anchor="middle">New Chart Title</text>
<path d="M347 790.4 H981" stroke="#dcdcdc" stroke-width="2"/>
<path d="M347 714.8 H981" stroke="#dcdcdc" stroke-width="2"/>
<path d="M347 639.2 H981" stroke="#dcdcdc" stroke-width="2"/>
<path d="M347 563.6 H981" stroke="#dcdcdc" stroke-width="2"/>
<path d="M347 488.0 H981" stroke="#dcdcdc" stroke-width="2"/>
<path d="M347 412.4 H981" stroke="#dcdcdc" stroke-width="2"/>
<text x="341" y="870.3" font-size="18" fill="#666" text-anchor="end">0</text>
<text x="341" y="794.7" font-size="18" fill="#666" text-anchor="end">10</text>
<text x="341" y="719.1" font-size="18" fill="#666" text-anchor="end">20</text>
<text x="341" y="643.5" font-size="18" fill="#666" text-anchor="end">30</text>
<text x="341" y="567.9" font-size="18" fill="#666" text-anchor="end">40</text>
<text x="341" y="492.3" font-size="18" fill="#666" text-anchor="end">50</text>
<text x="341" y="416.7" font-size="18" fill="#666" text-anchor="end">60</text>
<rect x="375" y="563.6" width="43.6" height="302.4" fill="url(#gb)"/>
<rect x="431" y="601.4" width="44" height="264.6" fill="url(#gg)"/>
<rect x="488" y="677.0" width="43.6" height="189.0" fill="url(#gy)"/>
<rect x="586" y="488.0" width="43.6" height="378.0" fill="url(#gb)"/>
<rect x="642" y="677.0" width="44" height="189.0" fill="url(#gg)"/>
<rect x="699" y="525.8" width="43.6" height="340.2" fill="url(#gy)"/>
<rect x="797" y="639.2" width="43.6" height="226.8" fill="url(#gb)"/>
<rect x="853" y="752.6" width="44" height="113.4" fill="url(#gg)"/>
<rect x="910" y="450.2" width="43.6" height="415.8" fill="url(#gy)"/>
<path d="M347 866.0 H981" stroke="#c4c4c4" stroke-width="2"/>
<path d="M347 866.0 V871.0" stroke="#c4c4c4" stroke-width="1.5"/>
<path d="M558.3 866.0 V871.0" stroke="#c4c4c4" stroke-width="1.5"/>
<path d="M769.7 866.0 V871.0" stroke="#c4c4c4" stroke-width="1.5"/>
<path d="M981 866.0 V871.0" stroke="#c4c4c4" stroke-width="1.5"/>
<text x="451.2" y="890" font-size="18" fill="#666" text-anchor="middle">Category1</text>
<text x="662.5" y="890" font-size="18" fill="#666" text-anchor="middle">Category2</text>
<text x="873.8" y="890" font-size="18" fill="#666" text-anchor="middle">Category3</text>
<rect x="995" y="624" width="14" height="14" fill="#65b7f3"/>
<text x="1016" y="637.5" font-size="18.2" fill="#606060">Series1</text>
<rect x="995" y="654" width="14" height="14" fill="#7de597"/>
<text x="1016" y="667.5" font-size="18.2" fill="#606060">Series2</text>
<rect x="995" y="684" width="14" height="14" fill="#fad384"/>
<text x="1016" y="697.5" font-size="18.2" fill="#606060">Series3</text>
</svg>



<!-- center toolbar -->
<svg style="left:275.2px;top:77px" width="28" height="49" viewBox="0 0 28 49">
  <path d="M0.5 0.8 H27 V2.5 Q27 5.5 24 5.5 H3.5 Q0.5 5.5 0.5 2.5 Z" fill="#419bf9"/>
  <path d="M2 8.3 H22 L27 13 V36 H0.5 V9.8 Q0.5 8.3 2 8.3 Z" fill="#419bf9"/>
  <path d="M22 8.3 L27 13 H22 Z" fill="#2f7fd6"/>
  <path d="M5.5 15.8 H21.2 M5.5 20.8 H13 M5.5 25.7 H11" stroke="#fff" stroke-width="2.4"/>
  <circle cx="16" cy="25" r="5.5" fill="#e6f1ff" stroke="#fff" stroke-width="1.3"/>
  <path d="M11 23.6 H21" stroke="#c4defb" stroke-width="1.8"/><path d="M11.6 27.6 H20.4" stroke="#d3e7fd" stroke-width="1.4"/>
  <path d="M20.3 29.4 L24.6 33.4" stroke="#8a8f98" stroke-width="2.2" stroke-linecap="round"/><path d="M21.8 30.6 L24.4 33" stroke="#e8e8e8" stroke-width="0.9" stroke-linecap="round"/>
  <path d="M11.6 44.3 H17.6 L14.6 47.6 Z" fill="#b0b0b0"/>
</svg>
<div class="a" style="left:321px;top:77px;width:1px;height:51px;background:#dcdcde"></div>
<svg style="left:336px;top:74px" width="20" height="20" viewBox="0 0 20 20">
  <path d="M1.2 0 H15.5 L20 4.5 V18.8 Q20 20 18.8 20 H1.2 Q0 20 0 18.8 V1.2 Q0 0 1.2 0 Z" fill="#5f9fe6"/>
  <rect x="3" y="2" width="11.5" height="6.5" fill="#fff"/><rect x="9.2" y="3" width="3.3" height="4.5" fill="#5f9fe6"/>
  <path d="M3 13 H15 M3 16.6 H11" stroke="#d5e6fa" stroke-width="1.6"/>
</svg>
<svg style="left:370px;top:74px" width="20" height="20" viewBox="0 0 20 20">
  <path d="M0 7.8 L8.6 0.6 V5 C15.5 5.2 19.8 10 19.6 18.8 C17.8 13.2 14.5 10.6 8.6 10.6 V15 Z" fill="#78b4f5"/>
</svg>
<svg style="left:403px;top:74px" width="20" height="20" viewBox="0 0 20 20">
  <path d="M20 7.8 L11.4 0.6 V5 C4.5 5.2 0.2 10 0.4 18.8 C2.2 13.2 5.5 10.6 11.4 10.6 V15 Z" fill="#a2a2a2"/>
</svg>
<div class="a" style="left:435px;top:74px;width:1px;height:20px;background:#dcdcde"></div>
<svg style="left:446px;top:74px" width="20" height="20" viewBox="0 0 20 20" fill="none" stroke="#a2a2a2">
  <circle cx="4" cy="16" r="3" stroke-width="1.8"/><circle cx="16" cy="16" r="3" stroke-width="1.8"/>
  <path d="M5.6 13.6 L14.8 0.5 M14.4 13.6 L5.2 0.5" stroke-width="1.9"/>
</svg>
<svg style="left:480px;top:74px" width="20" height="20" viewBox="0 0 20 20">
  <path d="M0 0 H7.5 L11.5 4 V13 H0 Z" fill="#a8a8a8"/><path d="M7.2 0 V4.3 H11.5 Z" fill="#c8c8c8"/>
  <path d="M7.5 6 H15.5 L20 10.5 V20 H7.5 Z" fill="#9c9c9c" stroke="#f4f4f6" stroke-width="0.8"/><path d="M15.3 6.2 V10.7 H19.8 Z" fill="#c4c4c4"/>
</svg>
<svg style="left:513px;top:74px" width="21" height="20" viewBox="0 0 21 20">
  <path d="M0 1.5 H13 V14.5 H0 Z" fill="#f5a91e"/><path d="M3.5 0 H9.5 V2.6 H3.5 Z" fill="#fbd38a"/><path d="M4.5 0.8 H8.5" stroke="#d9772b" stroke-width="0.9"/>
  <path d="M8.3 5.7 H15.7 L19.8 9.8 V19.3 H8.3 Z" fill="#fff5e0" stroke="#4a4a4a" stroke-width="1.3"/><path d="M15.5 5.9 V10 H19.6" fill="none" stroke="#4a4a4a" stroke-width="1.1"/>
</svg>
<svg style="left:546px;top:74px" width="22" height="20" viewBox="0 0 22 20">
  <path d="M11.5 8.2 L18.3 1.6 Q19.5 0.6 20.4 1.6 Q21.2 2.6 20.2 3.6 L13.5 10.2 Z" fill="#6f7785"/>
  <path d="M9.8 7.6 L13.8 11.6" stroke="#8a8f98" stroke-width="1.4"/>
  <path d="M0.5 7 C4 8 7 7.6 9.6 6.6 L14.2 11.4 C13.8 15 12.6 17.8 10.6 19.6 C8.5 19.8 6.6 18.6 5.2 17 C3 14.6 1.2 11.2 0.5 7 Z" fill="#f2ae1c"/>
</svg>
<div class="a" style="left:579px;top:74px;width:1px;height:20px;background:#dcdcde"></div>
<!-- tab bar content -->
<svg style="left:343px;top:109px" width="19" height="17" viewBox="0 0 19 17" fill="none" stroke="#333" stroke-width="1.3">
  <path d="M0.7 15 V0.7 H16.6 V6 M0.7 5.6 H16.6 M0.7 10.4 H9.5 M0.7 15 H6 M6 0.7 V15 M11.3 0.7 V8.5"/><path d="M9.8 12.6 H18.4 M14.1 8.3 V17" stroke-width="1.5"/>
</svg>
<svg style="left:372px;top:109px" width="17" height="17" viewBox="0 0 17 17">
  <path d="M0.7 6 V0.7 H16.3 V16.3 H9 M0.7 5 H16.3 M6 0.7 V5 M11.2 0.7 V16.3 M9 10.5 H16.3" fill="none" stroke="#333" stroke-width="1.3"/>
  <path d="M0.3 7 H3.8 V10.5 H6 V13.2 H3.8 V16.8 H0.3 Z" fill="#0a6cc2"/><path d="M4.6 7 H9.6 V16.8 H6.8 V9.6 H4.6 Z" fill="#22aae6"/>
</svg>
<div class="t" id="tabtxt" style="left:397px;top:107px;font-size:15.2px;color:#505050;-webkit-text-stroke:0">WorkBook1.cpt *</div>
<svg style="left:646px;top:113px" width="11" height="10" viewBox="0 0 11 10"><path d="M0.8 0.6 L10 9.4 M10 0.6 L0.8 9.4" stroke="#222" stroke-width="1.3" fill="none"/></svg>
<svg style="left:1076px;top:111px" width="16" height="13" viewBox="0 0 16 13"><path d="M1 0.3 H10 V4.8 H5 V10.6 H1 Z" fill="#333"/><path d="M6 6.9 H16.2 L11.1 12.7 Z" fill="#333"/></svg>
<!-- format bar -->
<div class="a" style="left:262px;top:139px;width:182px;height:25px;background:#f3f3e9;border:1px solid #d9dadd"></div>
<div class="a" style="left:419px;top:139px;width:25px;height:25px;background:#d9dadd"></div>
<svg style="left:426.5px;top:148.5px" width="10.5" height="6" viewBox="0 0 13 8"><path d="M0.7 0.8 L6.5 6.6 L12.3 0.8" stroke="#7a7a7a" stroke-width="1.2" fill="none"/></svg>
<div class="t" id="fArial" style="left:267px;top:140.5px;font-size:16px;letter-spacing:-0.4px;color:#a0a0a0;-webkit-text-stroke:0">Arial</div>
<div class="a" style="left:448px;top:139px;width:69px;height:25px;background:#fff;border:1px solid #d9dadd"></div>
<div class="a" style="left:492px;top:139px;width:25px;height:25px;background:#d9dadd"></div>
<svg style="left:499.5px;top:148.5px" width="10.5" height="6" viewBox="0 0 13 8"><path d="M0.7 0.8 L6.5 6.6 L12.3 0.8" stroke="#7a7a7a" stroke-width="1.2" fill="none"/></svg>
<div class="t" id="f90" style="left:454px;top:140.5px;font-size:16px;letter-spacing:-0.5px;color:#a0a0a0;-webkit-text-stroke:0">9.0</div>
<div class="t" style="left:530px;top:141px;font-size:15px;font-weight:bold;color:#8f8f8f">B</div>
<div class="t" style="left:565px;top:141px;font-size:15px;font-weight:bold;font-style:italic;color:#8f8f8f;font-family:'Liberation Serif',serif">I</div>
<div class="t" style="left:596px;top:140px;font-size:15px;font-weight:bold;color:#8f8f8f">U</div>
<div class="a" style="left:596px;top:157px;width:11px;height:1px;background:#8f8f8f"></div>
<div class="a" style="left:621px;top:141px;width:1px;height:20px;background:#dcdcde"></div>
<svg style="left:633px;top:144px" width="74" height="16" viewBox="0 0 74 16" stroke="#333" stroke-width="1.2" fill="none">
  <path d="M0 1.5 H18 M0 4.8 H12 M0 8.1 H18 M0 11.4 H12 M0 14.7 H18"/>
  <path d="M28 1.5 H46 M31 4.8 H43 M28 8.1 H46 M31 11.4 H43 M28 14.7 H46"/>
  <path d="M55.5 1.5 H73.5 M61.5 4.8 H73.5 M55.5 8.1 H73.5 M61.5 11.4 H73.5 M55.5 14.7 H73.5"/>
</svg>
<div class="a" style="left:719px;top:141px;width:1px;height:20px;background:#dcdcde"></div>
<svg style="left:727px;top:141px" width="35" height="20" viewBox="0 0 35 20">
  <rect x="0.75" y="0.75" width="17.5" height="17.5" fill="#e0e0e0" stroke="#222" stroke-width="1.5" stroke-dasharray="1.5 1.5"/>
  <path d="M9.5 1 V18 M1 9.5 H18" stroke="#444" stroke-width="1" stroke-dasharray="1.5 1.5"/>
  <path d="M27.8 9.4 H34.4 L31.1 12.8 Z" fill="#111"/>
</svg>
<svg style="left:777px;top:140px" width="35" height="22" viewBox="0 0 35 22">
  <rect x="0" y="16.6" width="20" height="4.6" fill="#fff"/>
  <path d="M7.5 4 L1.6 9.8 L7.8 16 L15 8.8 Z" fill="#fff" stroke="#222" stroke-width="1.4" stroke-linejoin="round"/>
  <rect x="5.2" y="1" width="3.6" height="5" fill="none" stroke="#222" stroke-width="1.2"/>
  <path d="M14 6.5 C17.5 7 19 10 17.6 14.5 C16.5 11.5 15.5 10.5 13 10.5 Z" fill="#222"/>
  <path d="M27.8 10.4 H34.4 L31.1 13.8 Z" fill="#111"/>
</svg>
<div class="t" style="left:829px;top:139px;font-size:18px;font-weight:bold;color:#999">A</div>
<div class="a" style="left:826px;top:157px;width:20px;height:4px;background:#8c8c8c"></div>
<svg style="left:854px;top:150px" width="7" height="4" viewBox="0 0 7 4"><path d="M0 0 H6.6 L3.3 3.6 Z" fill="#111"/></svg>
<div class="a" style="left:874px;top:141px;width:1px;height:20px;background:#dcdcde"></div>
<svg style="left:885px;top:143px" width="18" height="16" viewBox="0 0 18 16">
  <rect x="0.6" y="0.6" width="16.8" height="14.8" fill="#a5a5a5" stroke="#8f8f8f" stroke-width="1.2"/>
  <path d="M1.5 3 H7.5 M10.5 3 H16.5 M1.5 13 H7.5 M10.5 13 H16.5" stroke="#f0f0f0" stroke-width="1.4"/><path d="M9 1 V4 M9 12 V15" stroke="#8f8f8f" stroke-width="1.2"/>
</svg>
<svg style="left:917px;top:143px" width="18" height="16" viewBox="0 0 18 16">
  <rect x="0.6" y="0.6" width="16.8" height="14.8" fill="#a5a5a5" stroke="#8f8f8f" stroke-width="1.2"/>
  <path d="M2 3 H5.5 M7.2 3 H10.8 M12.5 3 H16 M2 13 H5.5 M7.2 13 H10.8 M12.5 13 H16" stroke="#f0f0f0" stroke-width="1.6"/>
  <path d="M6.3 1 V15 M11.7 1 V15 M1 5.3 H17 M1 10.7 H17" stroke="#8f8f8f" stroke-width="1"/>
</svg>
<div class="a" style="left:946px;top:141px;width:1px;height:20px;background:#dcdcde"></div>
<svg style="left:957px;top:147px" width="18" height="7" viewBox="0 0 18 7" fill="none" stroke="#8f8f8f" stroke-width="1.2">
  <rect x="0.6" y="0.6" width="16.8" height="5.8" rx="0.8"/><path d="M3 3.5 H4.5 M6.5 3.5 H14.5" stroke-width="1.8"/>
</svg>
<div class="t" style="left:989px;top:141.5px;font-size:15px;font-weight:bold;color:#8f8f8f;letter-spacing:-0.3px">ab</div>
<svg style="left:1020px;top:142.5px" width="21" height="18" viewBox="0 0 21 18" stroke="#8a8a8a" stroke-width="1.9" fill="none">
  <path d="M0 1.5 H20.5 M0 6.5 H14.5 M0 11.5 H20.5 M0 16.5 H14.5"/>
</svg>
<div class="t" style="left:1052px;top:140px;font-size:21px;color:#8f8f8f;font-family:'Liberation Serif',serif;line-height:22px">F</div>
<div class="t" style="left:1062.5px;top:143px;font-size:10.5px;color:#8f8f8f;font-family:'Liberation Serif',serif;transform:scaleY(1.3);letter-spacing:-0.4px">(x)</div>

<!-- RIGHT -->
<div class="a" id="sidestrip"></div>
<div class="a" id="rpanel"></div>


<!-- side strip icons -->
<svg style="left:1128px;top:78px" width="7" height="12" viewBox="0 0 7 12"><path d="M0 0 L7 6 L0 12 Z" fill="#adadad"/></svg>
<svg style="left:1121px;top:113px" width="20" height="21" viewBox="0 0 20 21" fill="none" stroke="#9c9c9c" stroke-width="1.9">
  <path d="M1 20 V1 H20 M1 13.6 H20 M13 1 V20 M13 7.3 H20 M7 13.6 V20"/>
</svg>
<svg style="left:1121px;top:153px" width="20" height="20" viewBox="0 0 20 20">
  <path d="M7 18.8 H1 V1 H18.8 V6 M1 6.6 H8.5 M1 12.7 H6.5 M7 1 V7 M12.9 1 V5.4" fill="none" stroke="#9c9c9c" stroke-width="1.9"/>
  <circle cx="13.8" cy="13.4" r="6.2" fill="#9c9c9c"/><circle cx="13.8" cy="9.8" r="1.15" fill="#e6e6e8"/><rect x="12.8" y="11.8" width="2" height="5.2" fill="#e6e6e8"/>
</svg>
<div class="a" style="left:1111px;top:185px;width:40px;height:36px;background:#f4f4f6"></div>
<svg style="left:1121px;top:193px" width="20" height="20" viewBox="0 0 20 20">
  <rect x="2.2" y="2.2" width="15.6" height="15.6" fill="none" stroke="#5aa7fa" stroke-width="2"/><rect x="5.2" y="5.2" width="9.6" height="9.6" fill="#419bf9"/>
  <path d="M0 2.2 H20 M0 17.8 H20" stroke="#419bf9" stroke-width="2.4"/>
  <path d="M0.6 0.6 H3.8 V3.8 H0.6 Z M16.2 0.6 H19.4 V3.8 H16.2 Z M0.6 16.2 H3.8 V19.4 H0.6 Z M16.2 16.2 H19.4 V19.4 H16.2 Z" fill="#419bf9"/>
</svg>
<svg style="left:1121px;top:235px" width="20" height="15" viewBox="0 0 20 15">
  <rect x="1" y="1" width="18" height="13" fill="none" stroke="#9c9c9c" stroke-width="1.9"/><path d="M10 5 H16.2 L13.1 9.6 Z" fill="#9c9c9c"/>
</svg>
<svg style="left:1119px;top:274px" width="24" height="17" viewBox="0 0 24 17" fill="none" stroke="#9c9c9c" stroke-width="1.8">
  <rect x="7" y="1.9" width="15.2" height="4.2"/><rect x="7" y="11" width="11.6" height="4.2"/><path d="M5 4.5 H1.8 V12.5 H5" stroke-width="1.3"/>
</svg>
<svg style="left:1120px;top:311px" width="22" height="22" viewBox="-11 -11 22 22">
  <g transform="translate(-0.5 0.2) rotate(45) scale(1.07) translate(-12 -12)">
    <path d="M3.9 12c0-1.71 1.39-3.1 3.1-3.1h3.4V6.7H7c-2.93 0-5.3 2.37-5.3 5.3s2.37 5.300 5.3 5.300h3.400v-2.200H7c-1.710 0-3.100-1.390-3.100-3.100zM7.6 13.100h8.800v-2.200H7.6v2.200zm9.400-6.400h-3.400v2.200h3.400c1.710 0 3.100 1.390 3.100 3.100s-1.390 3.100-3.100 3.100h-3.400V17.300h3.400c2.930 0 5.300-2.370 5.300-5.300s-2.370-5.300-5.300-5.300z" fill="#6b6f7b"/>
  </g>
</svg>
<!-- right panel -->
<div class="t" id="rp1" style="left:1168px;top:75px;font-size:15.5px">Floating Element</div>
<div class="a" style="left:1156px;top:101px;width:335px;height:1px;background:#dcdcde"></div>
<div class="t" id="rp2" style="left:1169px;top:120px;font-size:15.5px">Add Floating Element</div>
<div class="a" style="left:1336px;top:118px;width:136px;height:25px;background:#fff;border:1px solid #dcdcde"></div>
<svg style="left:1390px;top:122px" width="30" height="17" viewBox="0 0 30 17"><path d="M0 8.5 H17 M8.5 0 V17" stroke="#111" stroke-width="2"/><path d="M20.5 7 H27 L23.7 10.8 Z" fill="#a0a0a0"/></svg>
<div class="a" style="left:1156px;top:155px;width:335px;height:45px;background:#d9dadd"></div>
<div class="a" style="left:1321px;top:156px;width:86px;height:48px;background:#f0f0f2"></div>
<div class="t" id="rpType" style="left:1181px;top:170px;font-size:15.5px">Type</div>
<div class="t" style="left:1265px;top:170px;font-size:15.5px">Data</div>
<div class="t" id="rpStyle" style="left:1349px;top:170px;font-size:15.5px">Style</div>
<div class="t" id="rpSp" style="left:1420px;top:158px;font-size:15.5px">Special</div>
<div class="t" style="left:1420px;top:181px;font-size:15.5px">Effect</div>
<!-- grid -->
<div class="a" style="left:1163px;top:213px;width:315px;height:101px;background:#fff"></div>
<div class="a" style="left:1163px;top:263px;width:315px;height:1px;background:#e8e8ea"></div>
<div class="a" style="left:1242px;top:213px;width:1px;height:101px;background:#e8e8ea"></div>
<div class="a" style="left:1320px;top:213px;width:1px;height:101px;background:#e8e8ea"></div>
<div class="a" style="left:1399px;top:213px;width:1px;height:101px;background:#e8e8ea"></div>
<div class="a" style="left:1163px;top:213px;width:1px;height:101px;background:#e8e8ea"></div>
<div class="t" style="left:1163px;top:230px;width:79px;text-align:center;font-size:15.5px">Title</div>
<div class="t" style="left:1242px;top:230px;width:79px;text-align:center;font-size:15.5px">Legend</div>
<div class="t" style="left:1341px;top:230px;font-size:15.5px">Label</div>
<div class="a" style="left:1399px;top:213px;width:79px;height:51px;background:#3d95f6"></div>
<div class="t" style="left:1399px;top:230px;width:79px;text-align:center;font-size:15.5px">Series</div>
<div class="t" style="left:1163px;top:281px;width:79px;text-align:center;font-size:15.5px">Axis</div>
<div class="t" style="left:1245px;top:270px;font-size:15.5px">Data</div>
<div class="t" style="left:1245px;top:292px;font-size:15.5px">Table</div>
<div class="a" style="left:1321px;top:264px;width:76px;height:50px;overflow:hidden"><div class="t" style="left:3px;top:17px;font-size:15.5px">Background</div></div>
<div class="t" style="left:1400px;top:281px;width:78px;text-align:center;font-size:15.5px">Tooltip</div>
<!-- sections -->
<div class="a" style="left:1161px;top:320px;width:317px;height:30px;background:#ebebed"></div>
<div class="t" style="left:1168px;top:325px;font-size:15.5px">Color</div>
<svg style="left:1464px;top:330px" width="6" height="9" viewBox="0 0 6 9"><path d="M6 0 L0 4.5 L6 9 Z" fill="#adadad"/></svg>
<div class="a" style="left:1161px;top:352px;width:317px;height:26px;background:#ebebed"></div>
<div class="t" style="left:1168px;top:355px;font-size:14px">Style</div>
<svg style="left:1461px;top:362px" width="10" height="6" viewBox="0 0 10 6"><path d="M0 0 H10 L5 5.5 Z" fill="#b4b4b4"/></svg>
<div class="t" style="left:1167px;top:395px;font-size:15.5px">Fixed Column</div>
<div class="t" style="left:1167px;top:417px;font-size:15.5px">Width</div>
<div class="a" style="left:1285px;top:393px;width:97px;height:26px;background:#fff;border:1px solid #dcdcde"></div>
<div class="a" style="left:1381px;top:393px;width:97px;height:26px;background:#419bf9"></div>
<div class="t" style="left:1286px;top:397px;width:95px;text-align:center;font-size:15.5px">Yes</div>
<div class="t" style="left:1381px;top:397px;width:95px;text-align:center;font-size:15.5px">No</div>
<div class="t" style="left:1167px;top:456px;font-size:15.5px">Series Interval</div>
<div class="t" style="left:1286px;top:450px;font-size:15px;color:#444">-100</div>
<div class="t" style="left:1350px;top:450px;font-size:15px;color:#444">0</div>
<div class="t" style="left:1382px;top:450px;font-size:15px;color:#444">100</div>
<div class="a" style="left:1290px;top:471px;width:126px;height:2px;background:#707070"></div>
<svg style="left:1360px;top:467px" width="11" height="10" viewBox="0 0 11 10"><path d="M5.5 0.8 L10.3 9.3 H0.7 Z" fill="#a9cdf4" stroke="#86b4e6" stroke-width="1"/></svg>
<div class="a" style="left:1425px;top:453px;width:37px;height:26px;background:#fff;border:1px solid #dcdcde"></div>
<div class="a" style="left:1461px;top:453px;width:17px;height:26px;background:#e4e4e6"></div>
<div class="t" style="left:1430px;top:456px;font-size:15.5px">20</div>
<svg style="left:1463px;top:456px" width="12" height="20" viewBox="0 0 12 20" fill="none" stroke="#555" stroke-width="1.1"><path d="M1 6 L6 1 L11 6 M1 14 L6 19 L11 14"/></svg>
<div class="t" style="left:1167px;top:496px;font-size:15.5px">CATG-Interval</div>
<div class="t" style="left:1288px;top:490px;font-size:15px;color:#444">0</div>
<div class="t" style="left:1382px;top:490px;font-size:15px;color:#444">100</div>
<div class="a" style="left:1290px;top:511px;width:126px;height:2px;background:#707070"></div>
<svg style="left:1310px;top:507px" width="11" height="10" viewBox="0 0 11 10"><path d="M5.5 0.8 L10.3 9.3 H0.7 Z" fill="#ececec" stroke="#a8a8a8" stroke-width="1"/></svg>
<div class="a" style="left:1425px;top:493px;width:37px;height:26px;background:#fff;border:1px solid #dcdcde"></div>
<div class="a" style="left:1461px;top:493px;width:17px;height:26px;background:#e4e4e6"></div>
<div class="t" style="left:1430px;top:496px;font-size:15.5px">20</div>
<svg style="left:1463px;top:496px" width="12" height="20" viewBox="0 0 12 20" fill="none" stroke="#555" stroke-width="1.1"><path d="M1 6 L6 1 L11 6 M1 14 L6 19 L11 14"/></svg>
<div class="t" style="left:1167px;top:530px;font-size:15.5px">Filled with</div>
<div class="t" style="left:1167px;top:553px;font-size:15.5px">Image</div>
<div class="a" style="left:1285px;top:526px;width:97px;height:27px;background:#fff;border:1px solid #dcdcde"></div>
<div class="a" style="left:1381px;top:526px;width:97px;height:27px;background:#419bf9"></div>
<div class="t" style="left:1286px;top:531px;width:95px;text-align:center;font-size:15.5px">Yes</div>
<div class="t" style="left:1381px;top:531px;width:95px;text-align:center;font-size:15.5px">No</div>
<div class="a" style="left:1161px;top:594px;width:317px;height:30px;background:#ebebed"></div>
<div class="t" style="left:1167px;top:600px;font-size:15.5px">Border</div>
<svg style="left:1464px;top:605px" width="6" height="9" viewBox="0 0 6 9"><path d="M6 0 L0 4.5 L6 9 Z" fill="#adadad"/></svg>
<div class="a" style="left:1161px;top:639px;width:317px;height:30px;background:#ebebed"></div>
<div class="t" style="left:1167px;top:645px;font-size:15.5px">Trend Line</div>
<svg style="left:1464px;top:650px" width="6" height="9" viewBox="0 0 6 9"><path d="M6 0 L0 4.5 L6 9 Z" fill="#adadad"/></svg>
<!-- annotations -->
<div class="a red" style="left:1320px;top:157px;width:88px;height:48px"></div>
<div class="a red" style="left:1398px;top:211px;width:80px;height:54px"></div>
<div class="a red" style="left:1155px;top:351px;width:324px;height:229px"></div>
<div class="a circ" style="left:1265px;top:152px"><svg style="left:0;top:0" width="40" height="40" viewBox="0 0 40 40"><path d="M23.1 10 H20.5 C19.2 12.4 17.2 14.3 14.8 15.5 V18.8 C16.7 18 18.4 16.8 19.7 15.4 V31.2 H23.1 Z" fill="#fff"/></svg></div>
<div class="a circ" style="left:1348px;top:214px"><span style="position:relative;left:-0.5px;top:0.5px">2</span></div>
<div class="a circ" style="left:1105px;top:345px"><span style="position:relative;left:0;top:0.5px">3</span></div>

<!-- FRAME LINES -->
<div class="a" id="frameL"></div>
<div class="a" id="frameR"></div>
<div class="a" id="frameB"></div>
<div class="a" id="frameT"></div>
</body>
</html>
